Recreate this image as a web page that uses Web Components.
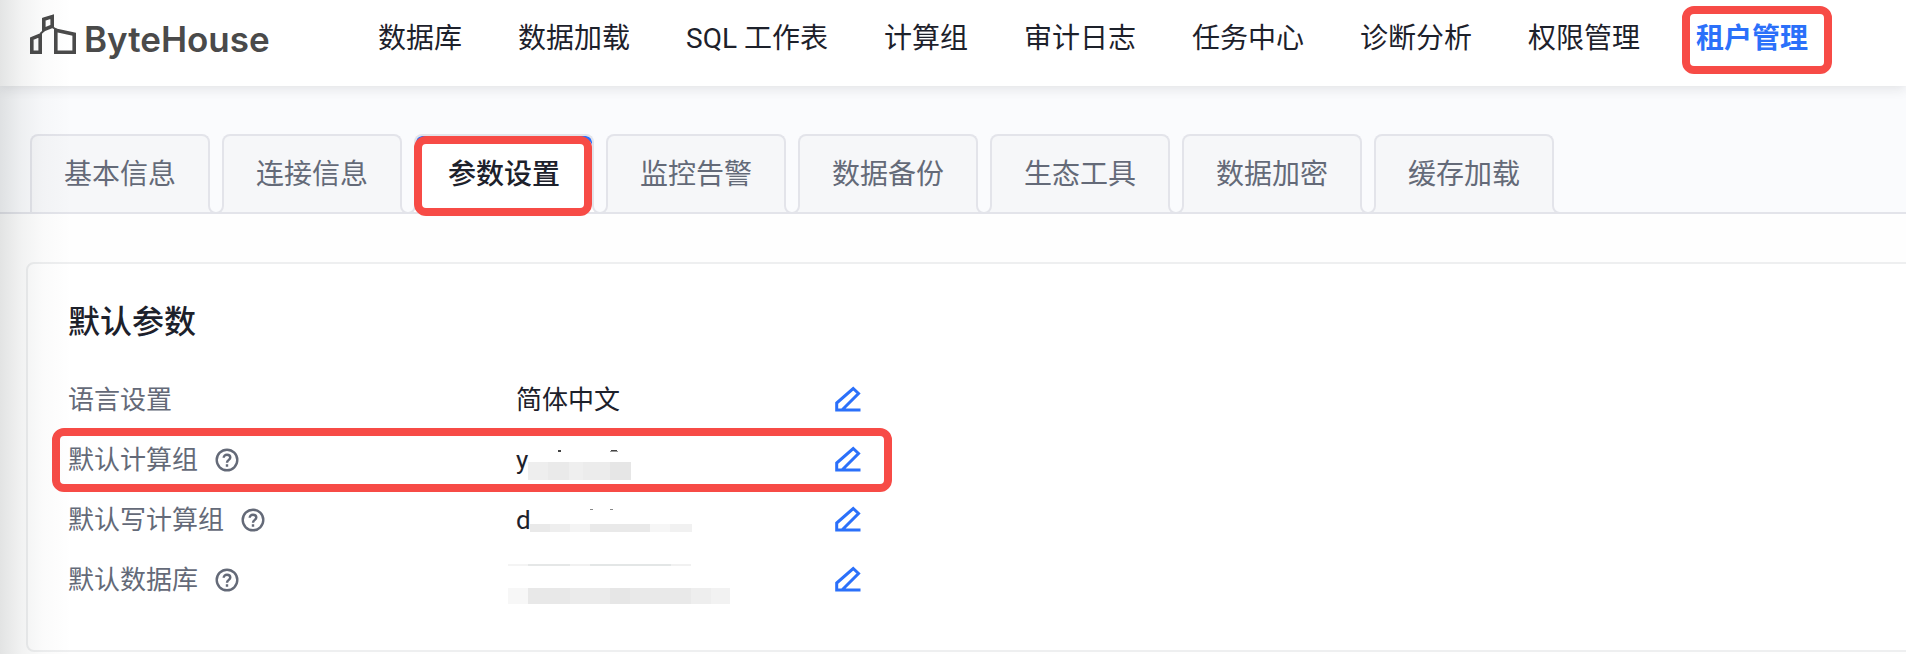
<!DOCTYPE html>
<html lang="zh-CN">
<head>
<meta charset="utf-8">
<title>ByteHouse</title>
<style>
html, body { margin: 0; min-height: 100%; }
body { background: #fefefe; font-family: Roboto, "Noto Sans CJK SC", sans-serif; color: #1d212b; overflow-x: hidden; }
</style>
</head>
<body>
<bh-app></bh-app>
<script>
function define(name, html, setup) {
  customElements.define(name, class extends HTMLElement {
    connectedCallback() {
      if (this.shadowRoot) return;
      const t = document.createElement('template');
      t.innerHTML = html;
      this.attachShadow({ mode: 'open' }).append(t.content.cloneNode(true));
      if (setup) setup.call(this, this.shadowRoot);
    }
  });
}

define('bh-logo', `
<style>
:host { display: block; }
a { display: flex; align-items: center; color: #4a4a4a; text-decoration: none; font: 600 35px/44px Inter, sans-serif; }
svg { display: block; margin: 0 8px 10px 0; }
</style>
<a href="#">
  <svg width="46" height="40" viewBox="0 0 46 40" fill="none" stroke="#4a4a4a" stroke-width="3.600">
    <path d="M1.800 24.600L10.200 21.200V38.200H1.800ZM13.800 5.300L22.200 2.600V12.200L13.800 15.600ZM25.800 16.200L44.200 20.300V38.200H25.800Z"/>
    <path d="M10.500 19.800L14 16.500M22 13L26.500 15.500" stroke-width="2"/>
  </svg>
  <span>ByteHouse</span>
</a>`);

define('bh-nav-item', `
<style>
:host { display: block; position: relative; }
a { display: block; white-space: nowrap; font-size: 28px; line-height: 40px; color: #1d212b; text-decoration: none; }
:host([current]) a { color: #2b70fa; font-weight: 700; }
:host([current])::after { content: ""; position: absolute; inset: -13px -24px -15px -14px; border: 8px solid #f74b46; border-radius: 12px; pointer-events: none; }
</style>
<a href="#"><slot></slot></a>`);

define('bh-header', `
<style>
:host { display: flex; box-sizing: border-box; height: 86px; padding: 0 30px 8px; align-items: center; background: #fff; box-shadow: 0 2px 12px rgba(30,35,45,.12); position: relative; }
bh-logo { width: 348px; flex: none; }
nav { display: flex; gap: 56px; }
</style>
<bh-logo></bh-logo>
<nav>
<bh-nav-item>数据库</bh-nav-item><bh-nav-item>数据加载</bh-nav-item><bh-nav-item>SQL 工作表</bh-nav-item><bh-nav-item>计算组</bh-nav-item><bh-nav-item>审计日志</bh-nav-item><bh-nav-item>任务中心</bh-nav-item><bh-nav-item>诊断分析</bh-nav-item><bh-nav-item>权限管理</bh-nav-item><bh-nav-item current>租户管理</bh-nav-item>
</nav>`);

define('bh-tab', `
<style>
:host { display: block; position: relative; --face: #f6f7f9; }
:host([current]) { --face: #fff; }
button { display: block; box-sizing: border-box; width: 180px; height: 78px; margin: 0; padding: 2px 0 0; border: 2px solid #e3e4ea; border-bottom: 0; border-radius: 8px 8px 0 0; background: var(--face); color: #646a78; font: 400 28px/40px Roboto, "Noto Sans CJK SC", sans-serif; }
svg { position: absolute; bottom: -2px; width: 8px; height: 12px; }
.l { left: -6px; transform: scaleX(-1); }
.r { right: -6px; }
:host([first]) .l { display: none; }
:host([current]) button { color: #1d212b; font-weight: 500; box-shadow: inset 0 4px #2b70fa; }
:host([current])::after { content: ""; position: absolute; inset: 2px 2px -4px 0; border: 8px solid #f74b46; border-radius: 12px; pointer-events: none; }
</style>
<button type="button" role="tab"><slot></slot></button>
<svg class="l" viewBox="0 0 8 12"><path d="M0 0H8V10H0Z" fill="var(--face)"/><path d="M1 0V4A7 7 0 0 0 8 11V0Z" fill="#fafbfd"/><path d="M1 0V4A7 7 0 0 0 8 11" fill="none" stroke="#e3e4ea" stroke-width="2"/></svg>
<svg class="r" viewBox="0 0 8 12"><path d="M0 0H8V10H0Z" fill="var(--face)"/><path d="M1 0V4A7 7 0 0 0 8 11V0Z" fill="#fafbfd"/><path d="M1 0V4A7 7 0 0 0 8 11" fill="none" stroke="#e3e4ea" stroke-width="2"/></svg>`);

define('bh-tabs', `
<style>
:host { display: flex; gap: 12px; padding: 48px 30px 0; background: #fafbfd; border-bottom: 2px solid #e3e4ea; }
</style>
<bh-tab first>基本信息</bh-tab><bh-tab>连接信息</bh-tab><bh-tab current>参数设置</bh-tab><bh-tab>监控告警</bh-tab><bh-tab>数据备份</bh-tab><bh-tab>生态工具</bh-tab><bh-tab>数据加密</bh-tab><bh-tab>缓存加载</bh-tab>`);

define('bh-row', `
<style>
:host { display: grid; grid-template-columns: 448px 318px 28px; align-items: center; height: 60px; position: relative; font-size: 26px; line-height: 38px; }
.label { display: flex; align-items: center; gap: 17px; color: #646a78; }
.help, .edit { display: block; border: 0; padding: 0; margin: 0; background: none; }
.help svg, .edit svg { display: block; }
:host(:not([help])) .help { display: none; }
:host([marked])::after { content: ""; position: absolute; inset: -2px auto -2px -16px; width: 824px; border: 8px solid #f74b46; border-radius: 12px; pointer-events: none; }
</style>
<div class="label"><slot name="label"></slot>
<button class="help" type="button" aria-label="help"><svg width="24" height="24" viewBox="0 0 24 24" fill="none" stroke="#646a78" stroke-width="2.400"><circle cx="12" cy="12" r="10.300"/><path d="M8.700 9.800C8.700 7.900 10 6.700 12 6.700S15.300 7.900 15.300 9.600C15.300 11.900 12 11.900 12 14.800M12 16.300V18.700"/></svg></button></div>
<div><slot></slot></div>
<button class="edit" type="button" aria-label="edit"><svg width="28" height="28" viewBox="0 0 28 28" fill="none" stroke="#2b70fa" stroke-width="3"><path d="M26.500 24H2.700V17L19.200 2.500L24.500 7.500L8 24"/></svg></button>`);

define('bh-redacted', `
<style>
:host { display: block; position: relative; height: 38px; }
svg { position: absolute; left: -8px; top: -11px; display: block; }
</style>
<slot></slot><svg width="230" height="60" viewBox="0 0 230 60" shape-rendering="crispEdges"></svg>`,
function (root) {
  const svg = root.querySelector('svg');
  svg.innerHTML = this.getAttribute('blocks').split(';').map(b => {
    const [x, y, w, h, c] = b.split(',');
    return `<rect x="${x}" y="${y}" width="${w}" height="${h}" fill="#${c}"/>`;
  }).join('');
});

define('bh-card', `
<style>
:host { display: block; box-sizing: border-box; margin: 48px -10px 0 26px; padding: 34px 40px 40px; border: 2px solid #eeeff0; border-radius: 8px; background: #fff; }
h2 { margin: 0 0 24px; font-size: 32px; line-height: 48px; font-weight: 500; }
</style>
<h2>默认参数</h2>
<bh-row><span slot="label">语言设置</span>简体中文</bh-row>
<bh-row help marked><span slot="label">默认计算组</span><bh-redacted blocks="50,20,3,2,444444;103,20,6,1,444444;102,21,8,1,999999;20,32,20,18,eeeeee;40,32,21,18,eaeaea;61,32,14,18,efefef;75,32,27,18,ececec;102,32,21,18,e6e6e6">y</bh-redacted></bh-row>
<bh-row help><span slot="label">默认写计算组</span><bh-redacted blocks="82,19,3,1,888888;102,19,3,1,888888;22,34,20,8,e9e9e9;42,34,20,8,eeeeee;62,34,20,8,f4f4f4;82,34,60,8,e9e9e9;142,34,20,8,f6f6f6;162,34,22,8,f1f1f1">d</bh-redacted></bh-row>
<bh-row help><span slot="label">默认数据库</span><bh-redacted blocks="0,14,20,2,f4f4f4;20,14,42,2,e5e7e7;62,14,20,2,f1f1f1;82,14,81,2,e3e6e6;163,14,20,2,f1f1f1;0,38,20,16,f7f7f7;20,38,42,16,e8e8e8;62,38,40,16,ebebeb;102,38,20,16,e6e6e6;122,38,61,16,e9e9e9;183,38,20,16,eeeeee;203,38,19,16,f2f2f2"></bh-redacted></bh-row>`);

define('bh-app', `
<style>
:host { display: block; position: relative; min-height: 100vh; overflow: hidden; }
.shade { position: absolute; inset: 0 auto 0 0; width: 72px; pointer-events: none; background: linear-gradient(90deg, rgba(40,50,50,.13), rgba(40,50,50,.06) 30%, rgba(40,50,50,.02) 60%, rgba(40,50,50,0)); }
</style>
<bh-header></bh-header>
<bh-tabs role="tablist"></bh-tabs>
<bh-card></bh-card>
<div class="shade"></div>`);
</script>
</body>
</html>
